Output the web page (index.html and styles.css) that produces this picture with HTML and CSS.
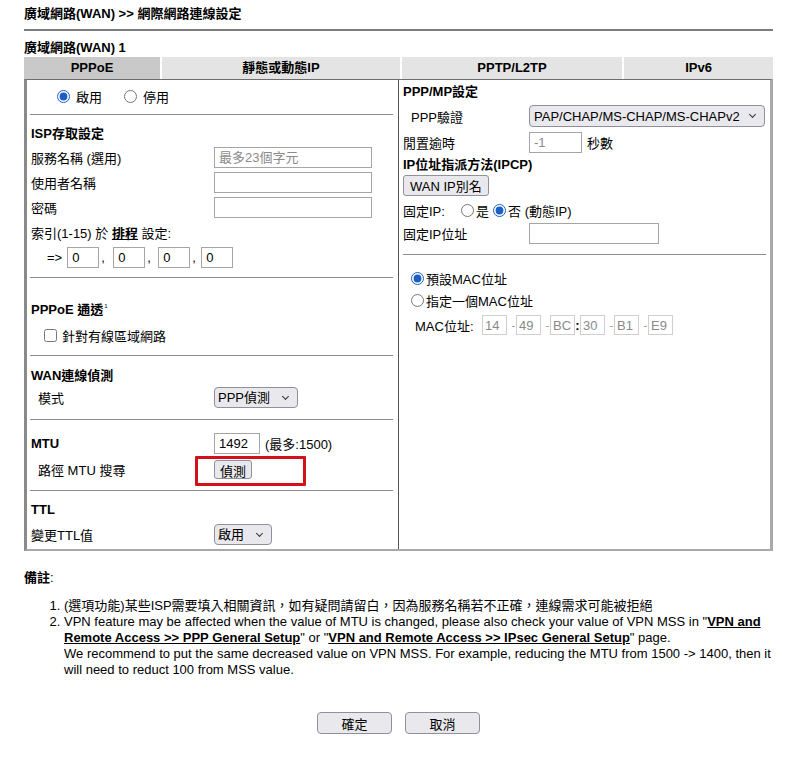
FILE: index.html
```html
<!DOCTYPE html>
<html lang="zh-Hant">
<head>
    <meta charset="UTF-8">
    <title>網際網路連線設定</title>
    <link rel="stylesheet" href="styles.css">
</head>
<body>
    <div class="page">
        <h1 class="page-title">廣域網路(WAN) &gt;&gt; 網際網路連線設定</h1>
        <h2 class="sub-title">廣域網路(WAN) 1</h2>

        <div class="tabs">
            <div class="tab tab-pppoe active">PPPoE</div>
            <div class="tab tab-static">靜態或動態IP</div>
            <div class="tab tab-pptp">PPTP/L2TP</div>
            <div class="tab tab-ipv6">IPv6</div>
        </div>

        <div class="panel">
            <div class="col col-left">
                <div class="enable-row">
                    <label class="radio"><input type="radio" name="enable" checked> 啟用</label>
                    <label class="radio"><input type="radio" name="enable"> 停用</label>
                </div>
                <div class="sep"></div>

                <div class="section sec-isp">
                    <div class="heading">ISP存取設定</div>
                    <div class="row">
                        <span class="lbl">服務名稱 (選用)</span>
                        <input type="text" class="txt w-long" placeholder="最多23個字元">
                    </div>
                    <div class="row">
                        <span class="lbl">使用者名稱</span>
                        <input type="text" class="txt w-long">
                    </div>
                    <div class="row">
                        <span class="lbl">密碼</span>
                        <input type="password" class="txt w-long">
                    </div>
                    <div class="row">
                        <span class="lbl-free">索引(1-15) 於 <a href="#" class="link">排程</a> 設定:</span>
                    </div>
                    <div class="row index-row">
                        <span class="arrow">=&gt;</span>
                        <input type="text" class="txt w-idx" value="0"><span class="comma">,</span>
                        <input type="text" class="txt w-idx" value="0"><span class="comma">,</span>
                        <input type="text" class="txt w-idx" value="0"><span class="comma">,</span>
                        <input type="text" class="txt w-idx" value="0">
                    </div>
                </div>
                <div class="sep"></div>

                <div class="section sec-pass">
                    <div class="heading">PPPoE 通透<sup>1</sup></div>
                    <div class="row check-row">
                        <label class="check"><input type="checkbox"> 針對有線區域網路</label>
                    </div>
                </div>
                <div class="sep"></div>

                <div class="section sec-detect">
                    <div class="heading">WAN連線偵測</div>
                    <div class="row">
                        <span class="lbl indent">模式</span>
                        <span class="select-wrap"><select class="sel"><option>PPP偵測</option></select></span>
                    </div>
                </div>
                <div class="sep"></div>

                <div class="section sec-mtu">
                    <div class="row">
                        <span class="lbl heading-inline">MTU</span>
                        <input type="text" class="txt w-mtu" value="1492">
                        <span class="after">(最多:1500)</span>
                    </div>
                    <div class="row row-gap">
                        <span class="lbl indent">路徑 MTU 搜尋</span>
                        <span class="mark-wrap">
                            <button type="button" class="btn btn-small">偵測</button>
                            <span class="mark"></span>
                        </span>
                    </div>
                </div>
                <div class="sep"></div>

                <div class="section sec-ttl">
                    <div class="heading">TTL</div>
                    <div class="row">
                        <span class="lbl">變更TTL值</span>
                        <span class="select-wrap"><select class="sel"><option>啟用</option></select></span>
                    </div>
                </div>
            </div>

            <div class="col col-right">
                <div class="heading">PPP/MP設定</div>
                <div class="row r-auth">
                    <span class="lbl-r indent-r">PPP驗證</span>
                    <span class="select-wrap"><select class="sel sel-auth"><option>PAP/CHAP/MS-CHAP/MS-CHAPv2</option></select></span>
                </div>
                <div class="row r-idle">
                    <span class="lbl-r">閒置逾時</span>
                    <input type="text" class="txt w-idle dim" value="-1">
                    <span class="after">秒數</span>
                </div>
                <div class="heading h-ipcp">IP位址指派方法(IPCP)</div>
                <div class="row r-alias">
                    <button type="button" class="btn">WAN IP別名</button>
                </div>
                <div class="row r-fixed">
                    <span class="fixed-lbl">固定IP:</span>
                    <label class="radio tight"><input type="radio" name="fixed">是</label>
                    <label class="radio tight"><input type="radio" name="fixed" checked>否 (動態IP)</label>
                </div>
                <div class="row r-addr">
                    <span class="lbl-r">固定IP位址</span>
                    <input type="text" class="txt w-ip">
                </div>
                <div class="sep sep-r"></div>

                <div class="mac">
                    <div class="row">
                        <label class="radio tight"><input type="radio" name="mac" checked>預設MAC位址</label>
                    </div>
                    <div class="row">
                        <label class="radio tight"><input type="radio" name="mac">指定一個MAC位址</label>
                    </div>
                    <div class="row mac-row">
                        <span class="mac-lbl">MAC位址:</span>
                        <input type="text" class="txt w-mac" value="14" disabled><span class="dash">-</span>
                        <input type="text" class="txt w-mac" value="49" disabled><span class="dash">-</span>
                        <input type="text" class="txt w-mac" value="BC" disabled><span class="colon">:</span>
                        <input type="text" class="txt w-mac" value="30" disabled><span class="dash">-</span>
                        <input type="text" class="txt w-mac" value="B1" disabled><span class="dash">-</span>
                        <input type="text" class="txt w-mac" value="E9" disabled>
                    </div>
                </div>
            </div>
        </div>

        <div class="notes">
            <div class="notes-title">備註<span class="normal">:</span></div>
            <ol class="notes-list">
                <li>(選項功能)某些ISP需要填入相關資訊，如有疑問請留白，因為服務名稱若不正確，連線需求可能被拒絕</li>
                <li>VPN feature may be affected when the value of MTU is changed, please also check your value of VPN MSS in "<a href="#" class="link">VPN and Remote Access &gt;&gt; PPP General Setup</a>" or "<a href="#" class="link">VPN and Remote Access &gt;&gt; IPsec General Setup</a>" page.<br>We recommend to put the same decreased value on VPN MSS. For example, reducing the MTU from 1500 -&gt; 1400, then it will need to reduct 100 from MSS value.</li>
            </ol>
        </div>

        <div class="actions">
            <button type="button" class="btn btn-action">確定</button>
            <button type="button" class="btn btn-action">取消</button>
        </div>
    </div>
</body>
</html>
```

FILE: styles.css
```css
* {
    box-sizing: border-box;
}

body {
    margin: 0;
    font-family: "Liberation Sans", "Noto Sans CJK TC", sans-serif;
    font-size: 13px;
    color: #000;
    background: #fff;
}

.page {
    width: 749px;
    margin-left: 24px;
    padding-top: 5px;
}

.page-title {
    margin: 0;
    font-size: 13px;
    font-weight: bold;
    line-height: 18px;
    padding-bottom: 6px;
    border-bottom: 2px solid #7c7c7c;
}

.sub-title {
    margin: 8px 0 1px;
    font-size: 13px;
    font-weight: bold;
    line-height: 17px;
}

/* tabs */
.tabs {
    display: flex;
    gap: 2px;
    height: 22px;
}

.tab {
    background: #e4e4e4;
    font-weight: bold;
    text-align: center;
    line-height: 21px;
}

.tab.active {
    background: #c9c9c9;
}

.tab-pppoe { width: 136px; }
.tab-static { width: 238px; }
.tab-pptp { width: 220px; }
.tab-ipv6 { width: 149px; }

/* main panel */
.panel {
    display: flex;
    border-top: 1px solid #6e6e6e;
    border-left: 3px solid #8a8a8a;
    border-right: 3px solid #a9a9a9;
    border-bottom: 2px solid #a9a9a9;
}

.col-left {
    width: 372px;
    border-right: 1px solid #555;
}

.col-right {
    width: 371px;
    padding-left: 4px;
}

.sep {
    border-top: 1px solid #8c8c8c;
    margin: 0 5px 0 3px;
}

.sep-r {
    margin: 10px 4px 0 0;
}

.heading {
    font-weight: bold;
    line-height: 22px;
    height: 22px;
    padding-left: 4px;
}

.col-right .heading {
    padding-left: 0;
}

.heading sup {
    font-size: 6px;
    font-weight: normal;
    vertical-align: 6px;
    margin-left: 1px;
}

.row {
    display: flex;
    align-items: center;
    height: 25px;
}

.lbl {
    width: 187px;
    padding-left: 4px;
    flex-shrink: 0;
}

.lbl.indent {
    padding-left: 11px;
}

.lbl-free {
    padding-left: 4px;
}

.heading-inline {
    font-weight: bold;
}

.lbl-r {
    width: 126px;
    flex-shrink: 0;
}

.lbl-r.indent-r {
    padding-left: 8px;
}

.after {
    margin-left: 5px;
}

/* inputs */
.txt {
    height: 21px;
    border: 1px solid #a5a5a5;
    padding: 0 4px;
    font-family: inherit;
    font-size: 13px;
    color: #000;
    background: #fff;
    outline: none;
}

.txt::placeholder {
    color: #8a8a8a;
}

.txt.dim {
    color: #8a8a8a;
}

.w-long { width: 158px; }
.w-idx { width: 32px; }
.w-mtu { width: 46px; }
.w-idle { width: 53px; }
.w-ip { width: 130px; }

.w-mac {
    width: 25px;
    height: 20px;
    padding: 0 2px;
    border-color: #cfcfcf;
    color: #8a8a8a;
    background: #fff;
}

.link {
    color: #000;
    font-weight: bold;
    text-decoration: underline;
}

.index-row {
    padding-left: 20px;
}

.arrow {
    margin-right: 5px;
}

.comma {
    width: 11px;
    padding-left: 2px;
}

.index-row .comma:nth-of-type(2) {
    width: 14px;
}

.index-row .comma:nth-of-type(3) {
    width: 13px;
}

/* radios and checkboxes */
.radio, .check {
    display: inline-flex;
    align-items: center;
}

.radio input, .check input {
    margin: 0 5px 0 0;
    width: 13px;
    height: 13px;
    accent-color: #1c5fc2;
}

.enable-row {
    height: 32px;
    display: flex;
    align-items: center;
    padding-left: 30px;
    gap: 22px;
}

.enable-row + .sep {
    margin-top: 2px;
}

.enable-row .radio input {
    margin-right: 6px;
}

.radio.tight input {
    margin-right: 2px;
}

.check input {
    margin-right: 5px;
}

.check-row {
    padding-left: 17px;
}

/* selects */
.select-wrap {
    position: relative;
    display: inline-block;
}

.select-wrap::after {
    content: "";
    position: absolute;
    right: 10px;
    top: 7px;
    width: 4px;
    height: 4px;
    border-right: 1.5px solid #333;
    border-bottom: 1.5px solid #333;
    transform: rotate(45deg);
    pointer-events: none;
}

.sel {
    -webkit-appearance: none;
    appearance: none;
    height: 21px;
    border: 1px solid #8f8f9d;
    border-radius: 4px;
    background: #e9e9ed;
    font-family: inherit;
    font-size: 13px;
    color: #000;
    padding: 0 26px 0 3px;
}

.sel-auth {
    width: 236px;
    height: 22px;
    padding: 0 18px 0 4px;
}

/* buttons */
.btn {
    height: 21px;
    border: 1px solid #8f8f9d;
    border-radius: 3px;
    background: #e9e9ed;
    font-family: inherit;
    font-size: 13px;
    color: #000;
    padding: 0 6px;
}

.btn-small {
    height: 19px;
    padding: 0 5px;
}

.mark-wrap {
    position: relative;
    display: inline-block;
}

.mark {
    position: absolute;
    left: -19px;
    top: -4px;
    width: 111px;
    height: 30px;
    border: 3px solid #d1121b;
    border-radius: 1px;
}

/* left sections */
.sec-isp {
    padding: 8px 0 7px;
}

.sec-pass {
    padding: 17px 0 7px;
}

.sec-pass .check-row {
    margin-top: 6px;
}

.sec-detect {
    padding: 10px 0 10px;
}

.sec-detect .heading {
    height: 20px;
    line-height: 20px;
}

.sec-detect .row {
    height: 23px;
}

.sec-mtu {
    padding: 11px 0 10px;
}

.sec-mtu .row {
    height: 22px;
}

.sec-mtu .row:first-child {
    margin-top: 1px;
    margin-bottom: -1px;
}

.sec-mtu .row-gap {
    margin-top: 5px;
}

.sec-ttl {
    padding: 8px 0 4px;
}

.sec-ttl .row {
    height: 22px;
    margin-top: 2px;
}

/* right column */
.col-right > .heading:first-child {
    margin-top: 1px;
}

.r-auth {
    height: 22px;
    margin-top: 2px;
}

.r-idle {
    height: 22px;
    margin-top: 4px;
}

.h-ipcp {
    height: 20px;
    line-height: 20px;
    margin-top: 2px;
}

.r-alias {
    height: 21px;
}

.r-fixed {
    height: 22px;
    margin-top: 3px;
}

.fixed-lbl {
    width: 58px;
}

.r-fixed .radio + .radio {
    margin-left: 4px;
}

.r-addr {
    height: 22px;
    margin-top: 1px;
}

.mac {
    padding: 12px 0 0 8px;
}

.mac .row {
    height: 22px;
}

.mac-row {
    margin-top: 3px;
}

.mac-lbl {
    padding-left: 4px;
    width: 71px;
}

.dash {
    width: 9px;
    text-align: right;
    padding-right: 1px;
    color: #8a8a8a;
    font-size: 10px;
}

.colon {
    width: 5px;
    text-align: center;
    font-weight: bold;
}

/* notes */
.notes {
    margin-top: 19px;
    line-height: 16px;
}

.notes-title {
    font-weight: bold;
}

.notes-title .normal {
    font-weight: normal;
}

.notes-list {
    margin: 12px 0 0;
    padding-left: 40px;
}

/* actions */
.actions {
    display: flex;
    justify-content: center;
    gap: 13px;
    margin-top: 34px;
}

.btn-action {
    width: 75px;
    height: 22px;
    border-radius: 4px;
}
```
